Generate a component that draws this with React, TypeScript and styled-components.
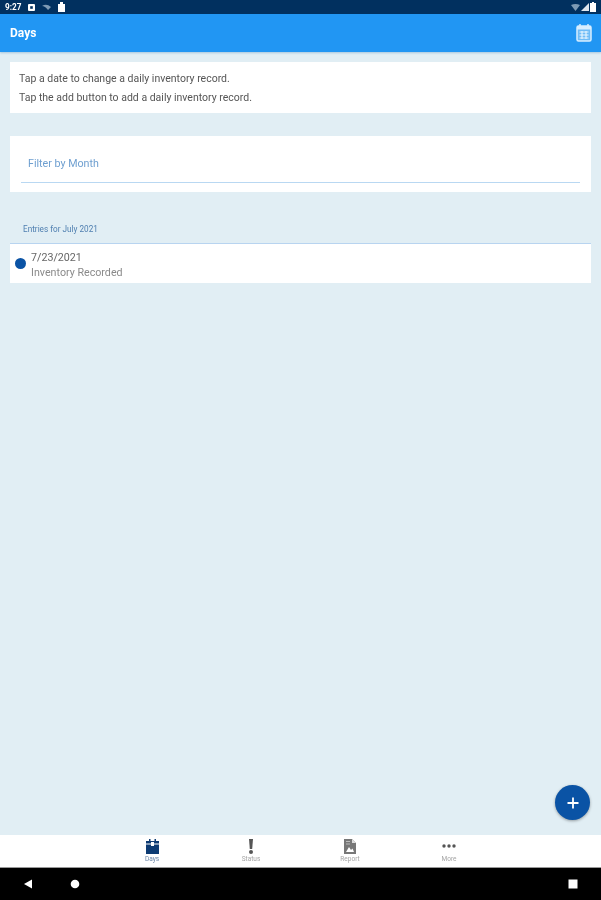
import styled, { createGlobalStyle } from "styled-components";

const GlobalStyle = createGlobalStyle`
	html, body {
		margin: 0;
		padding: 0;
		background: #000;
		font-family: Roboto, "Liberation Sans", sans-serif;
	}
`;

const Screen = styled.div`
	position: relative;
	display: flex;
	flex-direction: column;
	width: 601px;
	height: 900px;
	overflow: hidden;
	background: #e1eef4;
	filter: blur(0.45px);
`;

const StatusBar = styled.div`
	display: flex;
	align-items: center;
	justify-content: space-between;
	height: 14px;
	padding: 0 5px;
	background: #01305f;
	color: #fff;
`;

const StatusGroup = styled.div`
	display: flex;
	align-items: center;
	gap: ${({ $gap }: { $gap: number }) => $gap}px;
`;

const Clock = styled.span`
	font-size: 8.2px;
	font-weight: 700;
`;

const AppBar = styled.header`
	display: flex;
	align-items: center;
	justify-content: space-between;
	height: 38px;
	padding: 0 9px 0 10px;
	background: #2196f3;
	box-shadow: 0 1px 2px rgba(33, 110, 170, 0.3);
`;

const Title = styled.h1`
	margin: 0;
	color: #fff;
	font-size: 12px;
	font-weight: 700;
`;

const Content = styled.main`
	flex: 1;
	display: flex;
	flex-direction: column;
	padding: 10px 10px 0;
`;

const InfoCard = styled.section`
	display: flex;
	flex-direction: column;
	gap: 7px;
	height: 51px;
	box-sizing: border-box;
	padding: 11px 9px 0;
	background: #fff;
	color: #555;
	font-size: 10.5px;
	line-height: 12px;
`;

const FilterCard = styled.section`
	height: 56px;
	box-sizing: border-box;
	margin-top: 23px;
	padding: 0 11px;
	background: #fff;
`;

const FilterField = styled.div`
	height: 47px;
	box-sizing: border-box;
	padding: 22px 7px 0;
	border-bottom: 1px solid #b9d8f2;
	color: #6e9fd0;
	font-size: 10.7px;
	line-height: 12px;
`;

const SectionLabel = styled.div`
	margin-top: 31px;
	padding-left: 13px;
	height: 20px;
	color: #4f7fb0;
	font-size: 8.2px;
	line-height: 12px;
`;

const EntryRow = styled.div`
	display: flex;
	align-items: center;
	gap: 5px;
	height: 40px;
	box-sizing: border-box;
	padding-left: 5px;
	border-top: 1px solid #b8d4f0;
	background: #fff;
`;

const Dot = styled.span`
	width: 11px;
	height: 11px;
	border-radius: 50%;
	background: #0a53a5;
`;

const EntryText = styled.div`
	display: flex;
	flex-direction: column;
	gap: 3px;
	padding-top: 4px;
	font-size: 10.7px;
	line-height: 12px;
`;

const EntryDate = styled.span`
	color: #666;
`;

const EntryStatus = styled.span`
	color: #8a8a8a;
`;

const Fab = styled.button`
	position: absolute;
	left: 555px;
	top: 785px;
	display: flex;
	align-items: center;
	justify-content: center;
	width: 35px;
	height: 35px;
	padding: 0;
	border: 0;
	border-radius: 50%;
	background: #0a53a5;
	box-shadow: 0 1px 3px rgba(0, 0, 0, 0.35);
`;

const BottomNav = styled.nav`
	display: flex;
	justify-content: center;
	height: 33px;
	background: #fff;
	border-bottom: 1px solid #999;
	box-sizing: border-box;
`;

const NavItem = styled.div`
	display: flex;
	flex-direction: column;
	align-items: center;
	width: 99px;
	padding-top: 3px;
	color: ${({ $active }: { $active?: boolean }) => ($active ? "#6b86a8" : "#a5a5a5")};
	font-size: 6.5px;
	line-height: 8px;
`;

const NavIcon = styled.div`
	display: flex;
	align-items: center;
	justify-content: center;
	height: 16px;
	margin-bottom: 1px;
`;

const SystemBar = styled.div`
	display: flex;
	align-items: center;
	height: 32px;
	background: #000;
`;

const SystemSlot = styled.div`
	position: relative;
	display: flex;
	justify-content: center;
	width: ${({ $width }: { $width: number }) => $width}px;
`;

const Spacer = styled.div`
	flex: 1;
`;

export default function App() {
	return (
		<>
			<GlobalStyle />
			<Screen>
				<StatusBar>
					<StatusGroup $gap={7}>
						<Clock>9:27</Clock>
						<svg width="7" height="7" viewBox="0 0 7 7">
							<rect width="7" height="7" rx="1" fill="#fff" />
							<rect x="2.2" y="2.2" width="2.6" height="2.6" fill="#01305f" />
						</svg>
						<svg width="9" height="6" viewBox="0 0 9 6">
							<path d="M0 2 Q4.5 -1 9 3 L6 6 Q3 2 0 2Z" fill="#7d9ab5" />
						</svg>
						<svg width="7" height="10" viewBox="0 0 7 10">
							<path d="M2 0H5V2H7V10H0V2H2Z" fill="#fff" />
						</svg>
					</StatusGroup>
					<StatusGroup $gap={1}>
						<svg width="9" height="7" viewBox="0 0 9 7">
							<path d="M0 1 Q4.5 -1 9 1 L4.5 7Z" fill="#7d9ab5" />
						</svg>
						<svg width="8" height="8" viewBox="0 0 8 8">
							<path d="M8 0V8H0Z" fill="#dfe6ee" />
						</svg>
						<svg width="6" height="10" viewBox="0 0 6 10">
							<path d="M2 0H4V1H6V10H0V1H2Z" fill="#fff" />
						</svg>
					</StatusGroup>
				</StatusBar>
				<AppBar>
					<Title>Days</Title>
					<svg width="16" height="20" viewBox="0 0 16 20" fill="none">
						<rect x="1" y="3" width="14" height="15" rx="1.5" fill="#6fbcf7" stroke="#d8eeff" strokeWidth="1.5" />
						<rect x="1" y="3" width="14" height="3.5" fill="#d8eeff" />
						<path d="M4 1V4M12 1V4" stroke="#d8eeff" strokeWidth="1.5" />
						<path d="M3.5 9H12.5M3.5 12H12.5M3.5 15H12.5M6 8V16M10 8V16" stroke="#eaf6ff" strokeWidth="1.1" />
					</svg>
				</AppBar>
				<Content>
					<InfoCard>
						<span>Tap a date to change a daily inventory record.</span>
						<span>Tap the add button to add a daily inventory record.</span>
					</InfoCard>
					<FilterCard>
						<FilterField>Filter by Month</FilterField>
					</FilterCard>
					<SectionLabel>Entries for July 2021</SectionLabel>
					<EntryRow>
						<Dot />
						<EntryText>
							<EntryDate>7/23/2021</EntryDate>
							<EntryStatus>Inventory Recorded</EntryStatus>
						</EntryText>
					</EntryRow>
				</Content>
				<Fab aria-label="Add">
					<svg width="14" height="14" viewBox="0 0 14 14">
						<path d="M7 1.5V12.5M1.5 7H12.5" stroke="#fff" strokeWidth="1.8" />
					</svg>
				</Fab>
				<BottomNav>
					<NavItem $active>
						<NavIcon>
							<svg width="13" height="15" viewBox="0 0 13 15">
								<path d="M0 2H3V0H4.5V2H8.5V0H10V2H13V15H0Z" fill="#0d3b73" />
								<rect x="0" y="4.5" width="13" height="1" fill="#fff" />
								<rect x="5" y="3" width="3" height="4" fill="#fff" />
							</svg>
						</NavIcon>
						Days
					</NavItem>
					<NavItem>
						<NavIcon>
							<svg width="6" height="15" viewBox="0 0 6 15">
								<path d="M1 0H5L4.2 10H1.8Z" fill="#555" />
								<circle cx="3" cy="13" r="2" fill="#555" />
							</svg>
						</NavIcon>
						Status
					</NavItem>
					<NavItem>
						<NavIcon>
							<svg width="12" height="15" viewBox="0 0 12 15">
								<path d="M0 0H8L12 4V15H0Z" fill="#777" />
								<path d="M8 0L12 4H8Z" fill="#ddd" />
								<path d="M2 13L5 8L7 11L8.5 9.5L10 13Z" fill="#fff" />
								<rect x="2" y="2" width="4" height="1" fill="#bbb" />
								<rect x="2" y="4.5" width="4" height="1" fill="#bbb" />
							</svg>
						</NavIcon>
						Report
					</NavItem>
					<NavItem>
						<NavIcon>
							<svg width="14" height="4" viewBox="0 0 14 4">
								<circle cx="2" cy="2" r="1.7" fill="#555" />
								<circle cx="7" cy="2" r="1.7" fill="#555" />
								<circle cx="12" cy="2" r="1.7" fill="#555" />
							</svg>
						</NavIcon>
						More
					</NavItem>
				</BottomNav>
				<SystemBar>
					<SystemSlot $width={56}>
						<svg width="10" height="10" viewBox="0 0 10 10">
							<path d="M1 5L9 0.5V9.5Z" fill="#fff" />
						</svg>
					</SystemSlot>
					<SystemSlot $width={38}>
						<svg width="10" height="10" viewBox="0 0 10 10">
							<circle cx="5" cy="5" r="4.3" fill="#fff" />
						</svg>
					</SystemSlot>
					<Spacer />
					<SystemSlot $width={56}>
						<svg width="10" height="10" viewBox="0 0 10 10">
							<rect x="0.5" y="0.5" width="9" height="9" fill="#fff" />
						</svg>
					</SystemSlot>
				</SystemBar>
			</Screen>
		</>
	);
}
